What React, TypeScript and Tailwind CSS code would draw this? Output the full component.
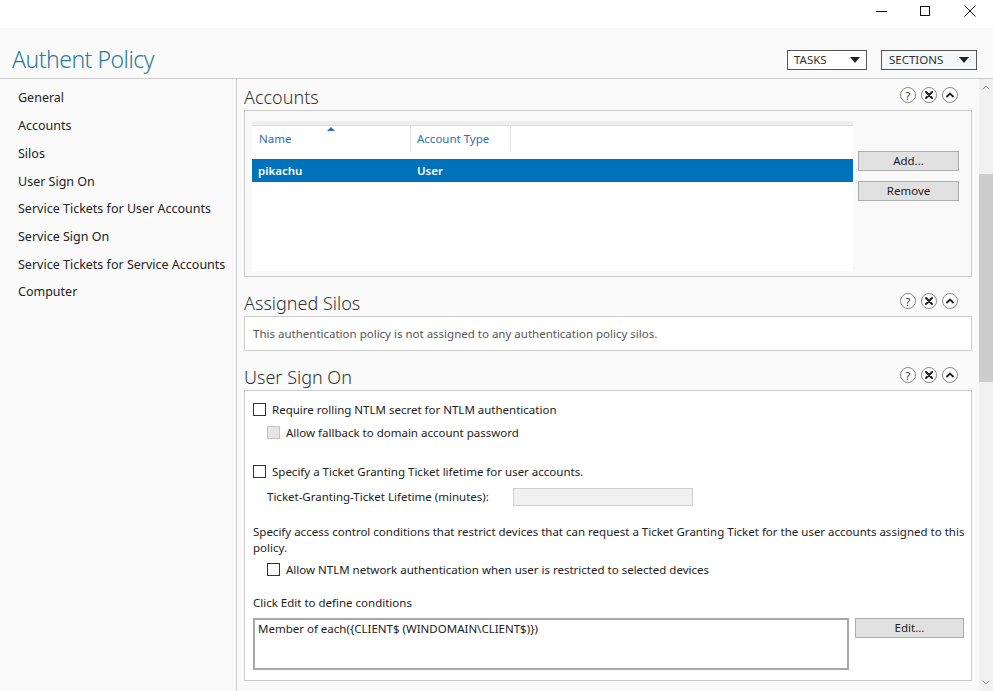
import React from "react";

const FONT = { fontFamily: '"Segoe UI", "Noto Sans", sans-serif' };

function HelpIcons() {
  return (
    <div className="flex items-center gap-[5px]">
      <span className="w-[16px] h-[16px] rounded-full border border-[#8a8a8a] bg-white flex items-center justify-center text-[11px] leading-none text-[#333]">?</span>
      <span className="w-[16px] h-[16px] rounded-full border border-[#8a8a8a] bg-white flex items-center justify-center">
        <svg width="8" height="8" viewBox="0 0 8 8"><path d="M1 1 L7 7 M7 1 L1 7" stroke="#222" strokeWidth="2" strokeLinecap="round" /></svg>
      </span>
      <span className="w-[16px] h-[16px] rounded-full border border-[#8a8a8a] bg-white flex items-center justify-center">
        <svg width="8" height="6" viewBox="0 0 8 6"><path d="M1 4.5 L4 1.5 L7 4.5" stroke="#222" strokeWidth="1.8" fill="none" strokeLinecap="round" /></svg>
      </span>
    </div>
  );
}

function SectionHeading({ title, first }: { title: string; first?: boolean }) {
  return (
    <div className={`h-[30px] flex items-center justify-between pr-[14px] ${first ? "" : "mt-[9px]"}`}>
      <span className="text-[18px] font-light text-[#333] leading-none pt-[3px]">{title}</span>
      <HelpIcons />
    </div>
  );
}

function Checkbox({ disabled }: { disabled?: boolean }) {
  return (
    <span
      className={`inline-block w-[13px] h-[13px] border shrink-0 ${
        disabled ? "border-[#c4c4c4] bg-[#e6e6e6]" : "border-[#333] bg-white"
      }`}
    />
  );
}

function Button({ label, w }: { label: string; w: string }) {
  return (
    <div className={`${w} h-[20px] border border-[#adadad] bg-[#e1e1e1] flex items-center justify-center text-[11.5px] text-[#222]`}>
      {label}
    </div>
  );
}

const navItems = [
  "General",
  "Accounts",
  "Silos",
  "User Sign On",
  "Service Tickets for User Accounts",
  "Service Sign On",
  "Service Tickets for Service Accounts",
  "Computer",
];

export default function App() {
  return (
    <div className="w-[993px] h-[691px] bg-[#fafafa] overflow-hidden flex flex-col text-[#222]" style={FONT}>
      {/* title bar */}
      <div className="h-[28px] bg-white flex justify-end items-start shrink-0">
        <div className="w-[44px] h-[22px] flex items-center justify-center">
          <span className="block w-[11px] h-px bg-[#111]" />
        </div>
        <div className="w-[44px] h-[22px] flex items-center justify-center">
          <span className="block w-[10px] h-[10px] border border-[#111]" />
        </div>
        <div className="w-[46px] h-[22px] flex items-center justify-center">
          <svg width="12" height="12" viewBox="0 0 12 12"><path d="M0.5 0.5 L11.5 11.5 M11.5 0.5 L0.5 11.5" stroke="#111" strokeWidth="1" /></svg>
        </div>
      </div>

      {/* header */}
      <div className="h-[51px] shrink-0 flex items-start justify-between border-b border-[#cccccc]">
        <div className="pl-[12px] pt-[20px] text-[23px] font-light tracking-[-0.5px] text-[#2c7aa0] leading-none">Authent Policy</div>
        <div className="flex gap-[14px] pt-[22px] pr-[16px]">
          <div className="w-[80px] h-[20px] border border-[#555] bg-white flex items-center justify-between px-[6px] text-[11.5px] text-[#333]">
            <span>TASKS</span>
            <svg width="10" height="6" viewBox="0 0 10 6"><path d="M0 0 H10 L5 6 Z" fill="#222" /></svg>
          </div>
          <div className="w-[96px] h-[20px] border border-[#555] bg-[#f5f8fb] flex items-center justify-between px-[7px] text-[11.5px] text-[#333]">
            <span>SECTIONS</span>
            <svg width="10" height="6" viewBox="0 0 10 6"><path d="M0 0 H10 L5 6 Z" fill="#222" /></svg>
          </div>
        </div>
      </div>

      {/* body */}
      <div className="flex flex-1 min-h-0">
        <nav className="w-[237px] shrink-0 border-r border-[#cccccc] pl-[18px] pt-[6px] flex flex-col">
          {navItems.map((n) => (
            <div key={n} className="h-[27.7px] flex items-center text-[12.5px] text-[#222]">{n}</div>
          ))}
        </nav>

        <main className="flex-1 min-w-0 px-[7px] pt-[1px] flex flex-col">
          <SectionHeading title="Accounts" first />
          <div className="h-[167px] border border-[#cccccc] bg-[#f9f9f9] flex pl-[7px] pt-[10px] pb-[5px]">
            <div className="w-[601px] bg-white flex flex-col">
              <div className="h-[5px] bg-[#eeeeee] border-b border-[#dddddd]" />
              <div className="h-[25px] flex text-[11.5px] text-[#2e6fb0] relative">
                <div className="w-[159px] border-r border-[#e3e3e3] pl-[7px] flex items-center relative">
                  Name
                  <svg className="absolute left-[75px] top-[1px]" width="8" height="4" viewBox="0 0 8 4"><path d="M0 4 L4 0 L8 4 Z" fill="#2e6fb0" /></svg>
                </div>
                <div className="w-[100px] border-r border-[#e3e3e3] pl-[6px] flex items-center">Account Type</div>
              </div>
              <div className="h-[8px]" />
              <div className="h-[23px] bg-[#0072bc] flex items-center text-[11.5px] text-white font-semibold">
                <span className="w-[165px] pl-[6px]">pikachu</span>
                <span>User</span>
              </div>
            </div>
            <div className="flex flex-col gap-[10px] pl-[5px] pt-[30px]">
              <Button label="Add..." w="w-[101px]" />
              <Button label="Remove" w="w-[101px]" />
            </div>
          </div>

          <SectionHeading title="Assigned Silos" />
          <div className="h-[35px] border border-[#cccccc] bg-white flex items-center pl-[8px] text-[11.5px] text-[#555]">
            This authentication policy is not assigned to any authentication policy silos.
          </div>

          <SectionHeading title="User Sign On" />
          <div className="h-[291px] border border-[#cccccc] bg-white pl-[8px] pt-[11px] text-[11.5px] text-[#222] flex flex-col">
            <label className="flex items-center gap-[6px] h-[15px]">
              <Checkbox /> Require rolling NTLM secret for NTLM authentication
            </label>
            <label className="flex items-center gap-[6px] h-[15px] mt-[8px] pl-[14px]">
              <Checkbox disabled /> Allow fallback to domain account password
            </label>
            <label className="flex items-center gap-[6px] h-[15px] mt-[24px]">
              <Checkbox /> Specify a Ticket Granting Ticket lifetime for user accounts.
            </label>
            <div className="flex items-center mt-[9px] pl-[14px]">
              <span className="w-[246px]">Ticket-Granting-Ticket Lifetime (minutes):</span>
              <span className="w-[180px] h-[18px] border border-[#cfcfcf] bg-[#f0f0f0]" />
            </div>
            <p className="mt-[18px] leading-[16px]">
              Specify access control conditions that restrict devices that can request a Ticket Granting Ticket for the user accounts assigned to this policy.
            </p>
            <label className="flex items-center gap-[6px] h-[15px] mt-[6px] pl-[14px]">
              <Checkbox /> Allow NTLM network authentication when user is restricted to selected devices
            </label>
            <div className="mt-[18px] h-[16px] flex items-center">Click Edit to define conditions</div>
            <div className="flex mt-[7px] gap-[6px]">
              <div className="w-[596px] h-[52px] border-2 border-[#a8a8a8] bg-white px-[3px] pt-[1px] leading-[16px]">
                {"Member of each({CLIENT$ (WINDOMAIN\\CLIENT$)})"}
              </div>
              <Button label="Edit..." w="w-[109px]" />
            </div>
          </div>
        </main>

        {/* vertical scrollbar */}
        <div className="w-[14px] shrink-0 bg-[#f0f0f0] flex flex-col items-center">
          <div className="h-[17px] flex items-center justify-center">
            <svg width="8" height="5" viewBox="0 0 8 5"><path d="M0.5 4.5 L4 1 L7.5 4.5" stroke="#a0a0a0" fill="none" /></svg>
          </div>
          <div className="w-full h-[78px]" />
          <div className="w-full h-[208px] bg-[#cdcdcd]" />
          <div className="flex-1" />
          <div className="h-[17px] flex items-center justify-center">
            <svg width="8" height="5" viewBox="0 0 8 5"><path d="M0.5 0.5 L4 4 L7.5 0.5" stroke="#a0a0a0" fill="none" /></svg>
          </div>
        </div>
      </div>
    </div>
  );
}
